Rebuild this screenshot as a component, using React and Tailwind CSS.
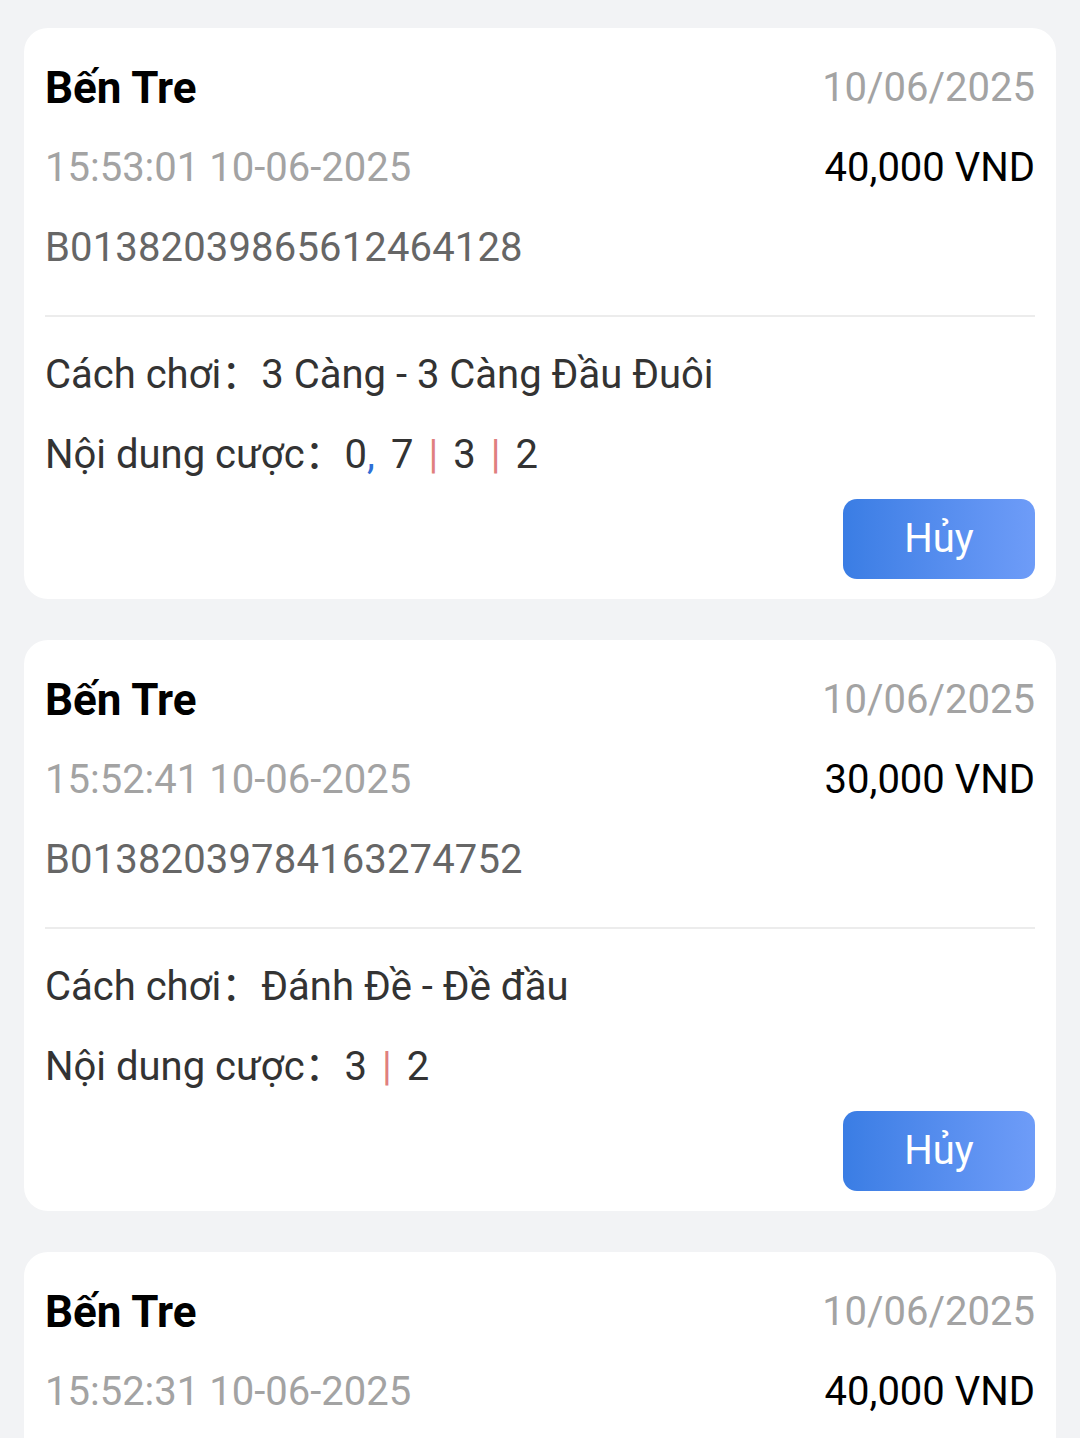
const ORDERS = [
  {
    id: 1,
    dai: 'Bến Tre',
    ngay: '10/06/2025',
    thoiGian: '15:53:01 10-06-2025',
    tien: '40,000 VND',
    ma: 'B01382039865612464128',
    cachChoi: '3 Càng - 3 Càng Đầu Đuôi',
    noiDung: [['0', '7'], ['3'], ['2']],
  },
  {
    id: 2,
    dai: 'Bến Tre',
    ngay: '10/06/2025',
    thoiGian: '15:52:41 10-06-2025',
    tien: '30,000 VND',
    ma: 'B01382039784163274752',
    cachChoi: 'Đánh Đề - Đề đầu',
    noiDung: [['3'], ['2']],
  },
  {
    id: 3,
    dai: 'Bến Tre',
    ngay: '10/06/2025',
    thoiGian: '15:52:31 10-06-2025',
    tien: '40,000 VND',
    ma: 'B01382039710356827648',
    cachChoi: '3 Càng - 3 Càng Đầu Đuôi',
    noiDung: [['1'], ['2'], ['3']],
  },
];

function NoiDung({ groups }) {
  return (
    <span>
      {groups.map((g, gi) => (
        <span key={gi}>
          {gi > 0 && <span className="text-[#e07f7f] px-[15px]">|</span>}
          {g.map((n, ni) => (
            <span key={ni}>
              {ni > 0 && <span className="text-[#2f6fd6] pr-[16px]">,</span>}
              {n}
            </span>
          ))}
        </span>
      ))}
    </span>
  );
}

function OrderCard({ order }) {
  return (
    <div className="bg-white rounded-[24px] px-[21px] pt-[20px] pb-[20px]">
      <div className="border-b-2 border-[#ececec] pb-[27px]">
        <div className="h-[80px] flex items-center justify-between">
          <span className="text-[44px] font-bold text-black">{order.dai}</span>
          <span className="text-[40px] text-[#a3a3a3]">{order.ngay}</span>
        </div>
        <div className="h-[80px] flex items-center justify-between">
          <span className="text-[40px] text-[#a3a3a3]">{order.thoiGian}</span>
          <span className="text-[40px] text-black">{order.tien}</span>
        </div>
        <div className="h-[80px] flex items-center text-[40px] text-[#666666] tracking-[0.15px]">{order.ma}</div>
      </div>

      <div className="pt-[18px]">
        <div className="h-[80px] flex items-center text-[40px] text-[#333333]">
          <span>Cách chơi：</span>
          <span>{order.cachChoi}</span>
        </div>
        <div className="h-[80px] flex items-center text-[40px] text-[#333333]">
          <span>Nội dung cược：</span>
          <NoiDung groups={order.noiDung} />
        </div>
      </div>

      <div className="flex justify-end mt-[4px]">
        <button className="w-[192px] h-[80px] rounded-[14px] bg-gradient-to-r from-[#3a7de4] to-[#6e9cf8] text-white text-[40px]">
          Hủy
        </button>
      </div>
    </div>
  );
}

export default function App() {
  return (
    <div
      className="h-[1438px] bg-[#f2f3f5] px-[24px] pt-[28px] flex flex-col gap-[41px] overflow-hidden"
      style={{ fontFamily: 'Roboto, "Noto Sans CJK SC", sans-serif' }}
    >
      {ORDERS.map((o) => (
        <OrderCard key={o.id} order={o} />
      ))}
    </div>
  );
}
